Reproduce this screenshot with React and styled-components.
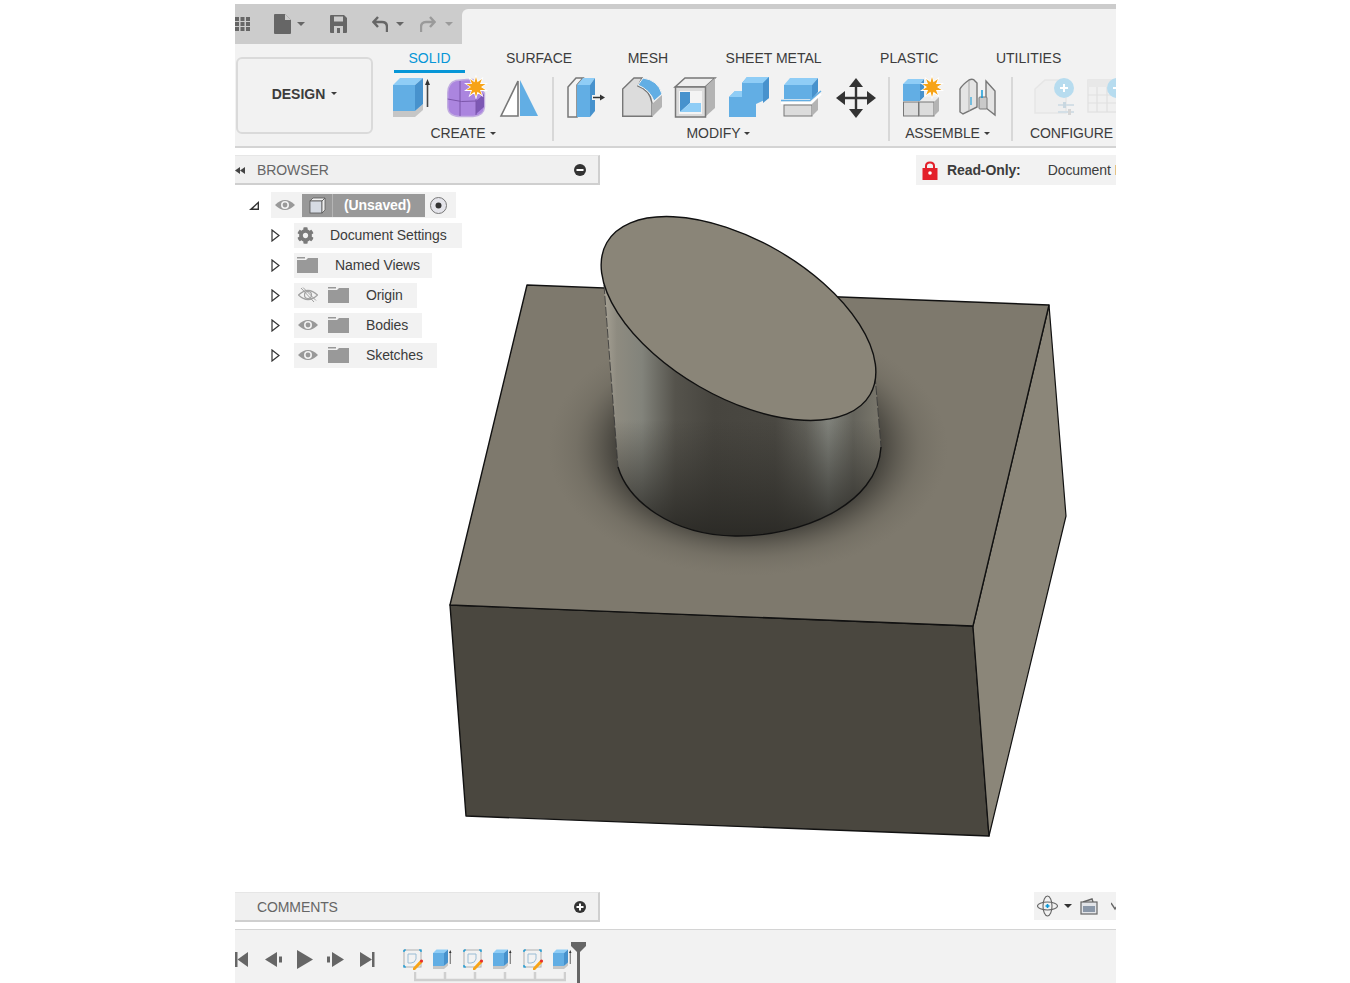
import React from 'react';
import styled, { createGlobalStyle } from 'styled-components';
import { FaCog } from 'react-icons/fa';

const GlobalStyle = createGlobalStyle`
  html, body {
    margin: 0;
    padding: 0;
    background: #ffffff;
    overflow: hidden;
  }
  * {
    box-sizing: border-box;
  }
`

const Stage = styled.div`
  width: 881px;
  height: 983px;
  margin-left: 235px;
  display: flex;
  flex-direction: column;
  overflow: hidden;
  font-family: "Liberation Sans", Arial, sans-serif;
  font-size: 14px;
  letter-spacing: -0.1px;
  color: #3c3c3c;
`

const TopBar = styled.div`
  height: 40px;
  margin-top: 4px;
  flex: none;
  display: flex;
  background: #cccccc;
`

const QuickBar = styled.div`
  width: 227px;
  flex: none;
  display: flex;
  align-items: center;
  padding-bottom: 1px;
`

const QuickIcon = styled.svg`
  display: block;
  flex: none;
  margin-left: ${p => p.$left}px;
`

const TabEar = styled.div`
  flex: 1;
  margin-top: 5px;
  background: #f2f2f2;
  border-top-left-radius: 6px;
`

const Caret = styled.span`
  flex: none;
  display: inline-block;
  margin-left: ${p => p.$left || 0}px;
  border-style: solid;
  border-width: ${p => p.$size || 4}px ${p => p.$size || 4}px 0;
  border-color: ${p => p.$color || '#3c3c3c'} transparent transparent;
`

const Ribbon = styled.div`
  height: 104px;
  flex: none;
  display: flex;
  background: #f2f2f2;
  border-bottom: 2px solid #d4d4d4;
`

const DesignButton = styled.div`
  width: 137px;
  height: 77px;
  flex: none;
  margin: 13px 0 0 1px;
  padding-bottom: 4px;
  display: flex;
  align-items: center;
  justify-content: center;
  gap: 6px;
  font-weight: bold;
  letter-spacing: 0;
  border: 2px solid #dadada;
  border-radius: 6px;
`

const RibbonBody = styled.div`
  margin-left: 20px;
  display: flex;
  flex: none;
  flex-direction: column;
`

const Tabs = styled.div`
  height: 29px;
  padding-left: 1px;
  display: flex;
`

const Tab = styled.div`
  height: 29px;
  margin-left: ${p => p.$gap}px;
  padding: 6px 14.5px 0;
  line-height: 16px;
  letter-spacing: 0;
  color: ${p => (p.$active ? '#0696d7' : '#3c3c3c')};
  border-bottom: 3px solid ${p => (p.$active ? '#0696d7' : 'transparent')};
`

const Tools = styled.div`
  margin-top: 4px;
  display: flex;
`

const ToolGroup = styled.div`
  flex: none;
  display: flex;
  flex-direction: column;
  align-items: center;
  padding-right: 12px;
  margin-right: ${p => p.$after || 0}px;
  border-right: ${p => (p.$last ? '0' : '2px solid #d8d8d8')};
  height: 64px;
`

const ToolRow = styled.div`
  display: flex;
  gap: ${p => p.$gap}px;
  height: 42px;
`

const ToolIcon = styled.svg`
  display: block;
  flex: none;
  width: 40px;
  height: 42px;
  overflow: visible;
`

const GroupLabel = styled.div`
  margin: 6px 7px 0 0;
  display: flex;
  align-items: center;
  gap: 4px;
  line-height: 16px;
  white-space: nowrap;
`

const Viewport = styled.div`
  position: relative;
  flex: 1;
  overflow: hidden;
  background: #ffffff;
`

const SceneCanvas = styled.svg`
  position: absolute;
  left: 0;
  top: 0;
  width: 881px;
  height: 782px;
`

const Overlay = styled.div`
  position: absolute;
  inset: 0;
  padding: 7px 0 7px;
  display: flex;
  flex-direction: column;
  justify-content: space-between;
`

const OverlayRow = styled.div`
  display: flex;
  justify-content: space-between;
  align-items: flex-start;
`

const Panel = styled.div`
  width: 365px;
  height: 30px;
  padding: 0 12px 0 22px;
  display: flex;
  align-items: center;
  position: relative;
  background: #f0f0f0;
  color: #666666;
  border-top: 1px solid #e6e6e6;
  border-right: 2px solid #cfcfcf;
  border-bottom: 2px solid #cfcfcf;
`

const PanelTitle = styled.div`
  flex: 1;
`

const PanelBack = styled.svg`
  position: absolute;
  left: 0;
  top: 11px;
`

const RoundButton = styled.svg`
  display: block;
`

const Tree = styled.div`
  padding-top: 5px;
  display: flex;
  flex-direction: column;
`

const TreeRow = styled.div`
  height: 30px;
  display: flex;
  align-items: center;
`

const Arrow = styled.svg`
  display: block;
  flex: none;
  margin-left: ${p => (p.$root ? 14 : 36)}px;
  margin-right: ${p => (p.$root ? 12 : 14)}px;
`

const Chip = styled.div`
  height: 25px;
  display: flex;
  align-items: center;
  padding: 0 ${p => p.$right || 14}px 0 3px;
  background: #f2f2f2;
`

const RowIcon = styled.svg`
  display: block;
  flex: none;
  margin-left: ${p => p.$left || 0}px;
`

const Gear = styled(FaCog)`
  flex: none;
  width: 17px;
  height: 17px;
  color: #7a7a7a;
`

const RowLabel = styled.span`
  margin-left: ${p => p.$left}px;
  white-space: nowrap;
`

const RootChip = styled(Chip)`
  height: 26px;
  padding: 0 9px 0 4px;
`

const Selected = styled.div`
  width: 123px;
  height: 23px;
  margin-left: 7px;
  display: flex;
  align-items: center;
  background: #999999;
  color: #ffffff;
  font-weight: bold;
`

const SelectedCube = styled.div`
  width: 31px;
  height: 100%;
  display: flex;
  align-items: center;
  justify-content: center;
  border-right: 1px solid #b5b5b5;
`

const SelectedName = styled.span`
  margin-left: 11px;
`

const ReadOnly = styled.div`
  width: 200px;
  height: 30px;
  display: flex;
  align-items: center;
  padding-left: 6px;
  background: #f2f2f2;
  white-space: nowrap;
  overflow: hidden;
`

const Lock = styled.svg`
  display: block;
  flex: none;
`

const ReadOnlyKey = styled.span`
  margin-left: 9px;
  font-weight: bold;
`

const ReadOnlyText = styled.span`
  margin-left: 27px;
`

const ViewTools = styled.div`
  width: 82px;
  height: 28px;
  display: flex;
  align-items: center;
  padding-left: 3px;
  background: #f2f2f2;
  overflow: hidden;
`

const ViewIcon = styled.svg`
  display: block;
  flex: none;
  margin-left: ${p => p.$left || 0}px;
`

const Timeline = styled.div`
  height: 54px;
  flex: none;
  position: relative;
  display: flex;
  background: #f2f2f2;
  border-top: 1px solid #d4d4d4;
`

const Transport = styled.div`
  width: 168px;
  flex: none;
  height: 100%;
  display: flex;
  align-items: center;
  padding-top: 6px;
`

const TransportIcon = styled.svg`
  display: block;
  flex: none;
  margin-left: ${p => p.$left}px;
`

const Track = styled.div`
  padding-top: 19px;
  display: flex;
  flex-direction: column;
`

const TrackItems = styled.div`
  display: flex;
  gap: 10px;
`

const TrackIcon = styled.svg`
  display: block;
  flex: none;
  width: 20px;
  height: 21px;
  overflow: visible;
`

const TrackBracket = styled.svg`
  display: block;
  margin: 2px 0 0 11px;
`

const Marker = styled.svg`
  position: absolute;
  left: 336px;
  top: 12px;
`

const BLUE = '#62aee4';
const BLUE_LIGHT = '#8fcdf6';
const BLUE_DARK = '#4792cd';
const GREY = '#dcdcdc';
const GREY_DARK = '#b4b4b4';

function starPoints(cx, cy, outer, inner, count) {
  const pts = [];
  for (let i = 0; i < count * 2; i++) {
    const r = i % 2 ? inner : outer;
    const a = (Math.PI * i) / count - Math.PI / 2;
    pts.push((cx + r * Math.cos(a)).toFixed(1) + ',' + (cy + r * Math.sin(a)).toFixed(1));
  }
  return pts.join(' ');
}

function Star({ x, y, r }) {
  return <polygon points={starPoints(x, y, r, r * 0.5, 10)} fill="#f7a316" stroke="#ffffff" strokeWidth="1.5" paintOrder="stroke" />;
}

function ExtrudeShapes() {
  return (
    <>
      <polygon points="0,34 22,34 30,27 30,33 22,40 0,40" fill="#c6c6c6" />
      <polygon points="0,8 7,1 30,1 22,8" fill={BLUE_LIGHT} />
      <rect x="0" y="8" width="22" height="26" fill={BLUE} />
      <polygon points="22,8 30,1 30,27 22,34" fill={BLUE_DARK} />
      <path d="M34.5 30V6" stroke="#444" strokeWidth="1.6" />
      <polygon points="34.5,2 32,8 37,8" fill="#333" />
    </>
  );
}

function ExtrudeIcon() {
  return <ToolIcon viewBox="0 0 40 42"><ExtrudeShapes /></ToolIcon>;
}

function FormIcon() {
  return (
    <ToolIcon viewBox="0 0 40 42">
      <path d="M0.700 16Q0.700 6 9 3.500L20 2.500H26L37.500 16V30Q37 39 26 39.500H12Q1 39 0.700 30Z" fill="#ab85df" stroke="#c2aee0" strokeWidth="1.400" />
      <polygon points="29,24 37,17 37,30 29,37" fill="#7d58b4" />
      <path d="M13 4V39M0.700 22Q14 26 29 24M29 22V38" fill="none" stroke="#7b55aa" strokeWidth="1" />
      <Star x={29} y={10} r={10} />
    </ToolIcon>
  );
}

function MirrorIcon() {
  return (
    <ToolIcon viewBox="0 0 40 42">
      <polygon points="18,4 18,39 1,39" fill="#ffffff" stroke="#777" strokeWidth="1.6" />
      <polygon points="20,3 38,39 20,39" fill={BLUE} />
    </ToolIcon>
  );
}

function PressPullIcon() {
  return (
    <ToolIcon viewBox="0 0 40 42">
      <polygon points="0,10 8,1 15,1 9,8 9,40 0,40" fill="#f4f4f4" stroke="#777" strokeWidth="1.5" />
      <polygon points="9,8 15,1 27,1 22,8" fill={BLUE_LIGHT} />
      <rect x="9" y="8" width="13" height="32" fill={BLUE} />
      <polygon points="22,8 27,1 27,34 22,40" fill={BLUE_DARK} />
      <rect x="24" y="18" width="6" height="5" fill="#f2f2f2" />
      <path d="M25 20.500H33" stroke="#333" strokeWidth="1.5" />
      <polygon points="37,20.500 32,17.500 32,23.500" fill="#333" />
    </ToolIcon>
  );
}

function FilletIcon() {
  return (
    <ToolIcon viewBox="0 0 40 42">
      <path d="M0.700 12L12 1H20L16 9Q28 13 30 26V39.300H0.700Z" fill={GREY} stroke="#777" strokeWidth="1.4" />
      <path d="M30 27L40 18V30L30 40Z" fill={GREY_DARK} />
      <path d="M21 1Q36 3 40 17L32 24Q28 13 16 8Z" fill={BLUE} stroke="#f2f2f2" strokeWidth="1" />
    </ToolIcon>
  );
}

function ShellIcon() {
  return (
    <ToolIcon viewBox="0 0 40 42">
      <polygon points="0,10 10,1 40,1 30,10" fill="#eeeeee" stroke="#777" strokeWidth="1.5" />
      <polygon points="30,10 40,1 40,31 30,40" fill={GREY_DARK} />
      <rect x="0.500" y="10" width="30" height="30" fill={GREY} stroke="#777" strokeWidth="1.5" />
      <rect x="4" y="14" width="23" height="23" fill="#f4f4f4" />
      <polygon points="5,15 15,15 15,26 5,35" fill={BLUE_DARK} />
      <polygon points="5,35 15,26 26,26 26,35" fill={BLUE_LIGHT} />
    </ToolIcon>
  );
}

function CombineIcon() {
  return (
    <ToolIcon viewBox="0 0 40 42">
      <polygon points="13,6 18,0 40,0 40,21 27,27 27,40 0,40 0,20 6,14 13,14" fill={BLUE} />
      <polygon points="13,6 18,0 40,0 34,6" fill={BLUE_LIGHT} />
      <polygon points="0,20 6,14 13,14 13,20" fill={BLUE_LIGHT} />
      <polygon points="34,6 40,0 40,21 34,26" fill={BLUE_DARK} />
    </ToolIcon>
  );
}

function SplitIcon() {
  return (
    <ToolIcon viewBox="0 0 40 42">
      <polygon points="2,8 8,1 36,1 30,8" fill={BLUE_LIGHT} />
      <rect x="2" y="8" width="28" height="14" fill={BLUE} />
      <polygon points="30,8 36,1 36,15 30,22" fill={BLUE_DARK} />
      <path d="M-1 26H29L39 17" fill="none" stroke="#ffffff" strokeWidth="2" />
      <path d="M-1 23.500H28L39 14" fill="none" stroke={BLUE} strokeWidth="1.500" />
      <rect x="2" y="28" width="28" height="11" fill={GREY} stroke="#777" strokeWidth="1" />
      <polygon points="30,27 36,21 36,33 30,39" fill={GREY_DARK} />
    </ToolIcon>
  );
}

function MoveIcon() {
  return (
    <ToolIcon viewBox="0 0 40 42">
      <path d="M20 6V35M5 21H35" stroke="#333" strokeWidth="2.400" />
      <polygon points="20,1 13,10 27,10" fill="#333" />
      <polygon points="20,41 13,32 27,32" fill="#333" />
      <polygon points="0,21 9,14 9,28" fill="#333" />
      <polygon points="40,21 31,14 31,28" fill="#333" />
    </ToolIcon>
  );
}

function ComponentIcon() {
  return (
    <ToolIcon viewBox="0 0 40 42">
      <polygon points="0,7 5,2 21,2 17,7" fill={BLUE_LIGHT} />
      <rect x="0" y="7" width="17" height="17" fill={BLUE} />
      <polygon points="17,7 21,2 21,20 17,24" fill={BLUE_DARK} />
      <rect x="0.500" y="25" width="15" height="14" fill={GREY} stroke="#777" strokeWidth="1" />
      <polygon points="16,25 21,20 36,20 31,25" fill="#ececec" />
      <rect x="16" y="25" width="15" height="14" fill={GREY} stroke="#777" strokeWidth="1" />
      <polygon points="31,25 36,20 36,34 31,39" fill={GREY_DARK} />
      <Star x={29} y={10} r={10} />
    </ToolIcon>
  );
}

function JointIcon() {
  return (
    <ToolIcon viewBox="0 0 40 42">
      <path d="M1 12Q3 8 10 3Q14 1 16 4L18 6V30L4 37L1 35Z" fill="#e4e4e4" stroke="#777" strokeWidth="1.400" />
      <path d="M10 4V34" stroke="#a8a8a8" strokeWidth="1" />
      <path d="M12 20V28" stroke="#0696d7" strokeWidth="1" />
      <path d="M27 4L36 14V38L27 31Z" fill="#e4e4e4" stroke="#777" strokeWidth="1.400" />
      <rect x="20" y="20" width="8" height="12" rx="1" fill="#c9c9c9" stroke="#777" strokeWidth="1" />
      <path d="M23 13V21" stroke="#0696d7" strokeWidth="1.400" />
    </ToolIcon>
  );
}

function PlusBadge() {
  return (
    <>
      <circle cx="30" cy="11" r="10" fill="#b7dcef" />
      <path d="M30 7V15M26 11H34" stroke="#ffffff" strokeWidth="2" />
    </>
  );
}

function ConfigureIcon() {
  return (
    <ToolIcon viewBox="0 0 40 42">
      <polygon points="1,12 11,3 32,3 32,36 1,36" fill="#efefef" stroke="#e6e6e6" strokeWidth="1.500" />
      <path d="M24 28H40M24 35H40" stroke="#d4dfe6" strokeWidth="2" />
      <rect x="29" y="25" width="3" height="6" fill="#c8d7e0" />
      <rect x="34" y="32" width="3" height="6" fill="#d6d6d6" />
      <PlusBadge />
    </ToolIcon>
  );
}

function TableIcon() {
  return (
    <ToolIcon viewBox="0 0 40 42">
      <rect x="1" y="3" width="30" height="32" fill="#f0f0f0" stroke="#e4e4e4" strokeWidth="1.500" />
      <rect x="1" y="3" width="30" height="7" fill="#e8e8e8" />
      <path d="M1 18H31M1 26H31M10 10V35M20 10V35" stroke="#e0e0e0" strokeWidth="1.200" />
      <PlusBadge />
    </ToolIcon>
  );
}

function FolderIcon({ left }) {
  return (
    <RowIcon $left={left} width="21" height="16" viewBox="0 0 21 16">
      <path d="M0 0H8V1.500H0Z" fill="#999" />
      <path d="M0 3H9L11 1H21V16H0Z" fill="#999" />
    </RowIcon>
  );
}

function EyeIcon({ off, left }) {
  return (
    <RowIcon $left={left} width="20" height="16" viewBox="0 0 20 16">
      {off ? (
        <>
          <path d="M0.500 8Q10 -1 19.500 8Q10 17 0.500 8Z" fill="none" stroke="#a0a0a0" strokeWidth="1.200" />
          <circle cx="10" cy="8" r="3.500" fill="none" stroke="#a0a0a0" strokeWidth="1.200" />
          <path d="M3 1L16 15M5 0.500L18 13.500" stroke="#a0a0a0" strokeWidth="1" />
        </>
      ) : (
        <>
          <path d="M0 8Q10 -2 20 8Q10 18 0 8Z" fill="#999" />
          <circle cx="10" cy="8" r="4" fill="#f2f2f2" />
          <circle cx="10" cy="8" r="2.400" fill="#999" />
        </>
      )}
    </RowIcon>
  );
}

function ExpandArrow() {
  return (
    <Arrow width="9" height="13" viewBox="0 0 9 13">
      <polygon points="1,1 8,6.500 1,12" fill="#ffffff" stroke="#333" strokeWidth="1.200" />
    </Arrow>
  );
}

function RootArrow() {
  return (
    <Arrow $root width="10" height="9" viewBox="0 0 10 9">
      <polygon points="0,9 10,9 10,0" fill="#333" />
      <polygon points="4,7.600 8.600,7.600 8.600,3" fill="#ffffff" />
    </Arrow>
  );
}

function SketchTrackIcon() {
  return (
    <TrackIcon viewBox="0 0 20 21">
      <rect x="1" y="1" width="17" height="17" fill="none" stroke="#b0b0b0" strokeWidth="1" />
      <path d="M1 1H3M16 1H18V3M1 1V3M1 16V18H3" fill="none" stroke="#0696d7" strokeWidth="1.200" />
      <path d="M5 5H13V10Q12 14 8 14H5Z" fill="none" stroke="#9abcd4" strokeWidth="1" />
      <path d="M10 19L17 11.500L19.500 13.500L12 21H10Z" fill="#f7a316" />
      <circle cx="18.500" cy="12" r="1.600" fill="#e8312c" />
    </TrackIcon>
  );
}

function ExtrudeTrackIcon() {
  return <TrackIcon viewBox="0 0 40 42"><ExtrudeShapes /></TrackIcon>;
}

const TABS = [
  { label: 'SOLID', gap: 0 },
  { label: 'SURFACE', gap: 26.5 },
  { label: 'MESH', gap: 26.5 },
  { label: 'SHEET METAL', gap: 28.5 },
  { label: 'PLASTIC', gap: 29.5 },
  { label: 'UTILITIES', gap: 28.5 },
];
const TRACK = [SketchTrackIcon, ExtrudeTrackIcon, SketchTrackIcon, ExtrudeTrackIcon, SketchTrackIcon, ExtrudeTrackIcon];

const CYLINDER = 'M603 275L618 467C628 500 670 535 735 536C800 537 878 505 881 447L875 370L738 330Z';

function Scene() {
  return (
    <SceneCanvas viewBox="235 148 881 782">
      <defs>
        <linearGradient id="cylinderShade" gradientUnits="userSpaceOnUse" x1="603" y1="0" x2="881" y2="0">
          <stop offset="0" stopColor="#a8a396" />
          <stop offset="0.05" stopColor="#8e8b80" />
          <stop offset="0.14" stopColor="#82837b" />
          <stop offset="0.26" stopColor="#55534c" />
          <stop offset="0.4" stopColor="#47453f" />
          <stop offset="0.62" stopColor="#4a4842" />
          <stop offset="0.73" stopColor="#62615a" />
          <stop offset="0.81" stopColor="#81837c" />
          <stop offset="0.9" stopColor="#65645c" />
          <stop offset="1" stopColor="#7b786d" />
        </linearGradient>
        <linearGradient id="cylinderFade" gradientUnits="userSpaceOnUse" x1="0" y1="420" x2="0" y2="536">
          <stop offset="0" stopColor="#2f2e2a" stopOpacity="0" />
          <stop offset="1" stopColor="#2a2925" stopOpacity="0.95" />
        </linearGradient>
        <radialGradient id="baseShadow" gradientUnits="userSpaceOnUse" cx="0" cy="0" r="1" gradientTransform="translate(748 448) scale(200 128)">
          <stop offset="0.6" stopColor="#2f2e2a" stopOpacity="0.95" />
          <stop offset="0.72" stopColor="#3f3d37" stopOpacity="0.6" />
          <stop offset="0.86" stopColor="#5a574e" stopOpacity="0.25" />
          <stop offset="1" stopColor="#6a665b" stopOpacity="0" />
        </radialGradient>
        <clipPath id="topFaceClip">
          <polygon points="527,285 1049,305 973,626 450,605" />
        </clipPath>
      </defs>
      <polygon points="450,605 973,626 989,836 466,816" fill="#4a473f" stroke="#111" strokeWidth="1.400" strokeLinejoin="round" />
      <polygon points="1049,305 1066,516 989,836 973,626" fill="#8b8679" stroke="#111" strokeWidth="1.200" strokeLinejoin="round" />
      <polygon points="527,285 1049,305 973,626 450,605" fill="#7e796d" stroke="#111" strokeWidth="1.400" strokeLinejoin="round" />
      <g clipPath="url(#topFaceClip)">
        <rect x="450" y="285" width="600" height="341" fill="url(#baseShadow)" />
      </g>
      <path d={CYLINDER} fill="url(#cylinderShade)" />
      <path d={CYLINDER} fill="url(#cylinderFade)" />
      <path d="M618 467C628 500 670 535 735 536C800 537 878 505 881 447" fill="none" stroke="#111" strokeWidth="1.400" />
      <path d="M604 285L618 467M875 375L881 447" fill="none" stroke="#333" strokeWidth="0.800" strokeDasharray="9 2" />
      <ellipse cx="738.500" cy="318.500" rx="152" ry="78.500" transform="rotate(30 738.500 318.500)" fill="#8a8578" stroke="#111" strokeWidth="1.400" />
    </SceneCanvas>
  );
}

function App() {
  return (
    <>
      <GlobalStyle />
      <Stage>
        <TopBar>
          <QuickBar>
            <QuickIcon $left={0} width="15" height="16" viewBox="0 0 15 16">
              <path d="M0 1H4V5H0ZM5.500 1H9.500V5H5.500ZM11 1H15V5H11ZM0 6H4V10H0ZM5.500 6H9.500V10H5.500ZM11 6H15V10H11ZM0 11H4V15H0ZM5.500 11H9.500V15H5.500ZM11 11H15V15H11Z" fill="#666" />
            </QuickIcon>
            <QuickIcon $left={24} width="17" height="20" viewBox="0 0 17 20">
              <path d="M1 0H11L17 6V19Q17 20 16 20H1Q0 20 0 19V1Q0 0 1 0Z" fill="#666" />
              <path d="M11 0V6H17" fill="#cccccc" />
            </QuickIcon>
            <Caret $left={6} $size={4.500} $color="#666" />
            <QuickIcon $left={25} width="17" height="18" viewBox="0 0 17 18">
              <path d="M1 0H14L17 3V17Q17 18 16 18H1Q0 18 0 17V1Q0 0 1 0Z" fill="#666" />
              <rect x="4" y="1.500" width="9" height="5" fill="#cccccc" />
              <rect x="4" y="11" width="9" height="7" fill="#cccccc" />
              <rect x="7" y="13" width="3" height="5" fill="#666" />
            </QuickIcon>
            <QuickIcon $left={25} width="16" height="16" viewBox="0 0 16 16">
              <path d="M6 1L1.500 6L6 11M2 6H10Q15 6 15 11V16" fill="none" stroke="#666" strokeWidth="2.400" />
            </QuickIcon>
            <Caret $left={8} $size={4.500} $color="#666" />
            <QuickIcon $left={16} width="16" height="16" viewBox="0 0 16 16">
              <path d="M10 1L14.500 6L10 11M14 6H6Q1 6 1 11V16" fill="none" stroke="#9a9a9a" strokeWidth="2.400" />
            </QuickIcon>
            <Caret $left={9} $size={4.500} $color="#9a9a9a" />
          </QuickBar>
          <TabEar />
        </TopBar>

        <Ribbon>
          <DesignButton>
            DESIGN
            <Caret $size={3.500} />
          </DesignButton>
          <RibbonBody>
            <Tabs>
              {TABS.map((tab, i) => <Tab key={tab.label} $gap={tab.gap} $active={i === 0}>{tab.label}</Tab>)}
            </Tabs>
            <Tools>
              <ToolGroup $after={14}>
                <ToolRow $gap={13.5}>
                  <ExtrudeIcon />
                  <FormIcon />
                  <MirrorIcon />
                </ToolRow>
                <GroupLabel>CREATE <Caret $size={3.500} /></GroupLabel>
              </ToolGroup>
              <ToolGroup $after={13}>
                <ToolRow $gap={13.6}>
                  <PressPullIcon />
                  <FilletIcon />
                  <ShellIcon />
                  <CombineIcon />
                  <SplitIcon />
                  <MoveIcon />
                </ToolRow>
                <GroupLabel>MODIFY <Caret $size={3.500} /></GroupLabel>
              </ToolGroup>
              <ToolGroup $after={17}>
                <ToolRow $gap={16}>
                  <ComponentIcon />
                  <JointIcon />
                </ToolRow>
                <GroupLabel>ASSEMBLE <Caret $size={3.500} /></GroupLabel>
              </ToolGroup>
              <ToolGroup $last>
                <ToolRow $gap={13}>
                  <ConfigureIcon />
                  <TableIcon />
                </ToolRow>
                <GroupLabel>CONFIGURE <Caret $size={3.500} /></GroupLabel>
              </ToolGroup>
            </Tools>
          </RibbonBody>
        </Ribbon>

        <Viewport>
          <Scene />
          <Overlay>
            <OverlayRow>
              <div>
                <Panel>
                  <PanelBack width="10" height="7" viewBox="0 0 10 7">
                    <polygon points="0,3.500 5,0 5,7" fill="#444" />
                    <polygon points="5,3.500 10,0 10,7" fill="#444" />
                  </PanelBack>
                  <PanelTitle>BROWSER</PanelTitle>
                  <RoundButton width="12" height="12" viewBox="0 0 12 12">
                    <circle cx="6" cy="6" r="6" fill="#333" />
                    <rect x="2.500" y="5" width="7" height="2" fill="#ffffff" />
                  </RoundButton>
                </Panel>
                <Tree>
                  <TreeRow>
                    <RootArrow />
                    <RootChip>
                      <EyeIcon />
                      <Selected>
                        <SelectedCube>
                          <svg width="17" height="17" viewBox="0 0 17 17">
                            <polygon points="1,4 4,1 16,1 13,4" fill="#f2f2f2" stroke="#555" strokeWidth="0.800" />
                            <rect x="1" y="4" width="12" height="12" fill="#d6dbe3" stroke="#555" strokeWidth="0.800" />
                            <polygon points="13,4 16,1 16,13 13,16" fill="#eeeeee" stroke="#555" strokeWidth="0.800" />
                          </svg>
                        </SelectedCube>
                        <SelectedName>(Unsaved)</SelectedName>
                      </Selected>
                      <RowIcon $left={5} width="17" height="17" viewBox="0 0 17 17">
                        <circle cx="8.500" cy="8.500" r="8" fill="#e4e4ea" stroke="#777" strokeWidth="1" />
                        <circle cx="8.500" cy="8.500" r="3" fill="#333" />
                      </RowIcon>
                    </RootChip>
                  </TreeRow>
                  <TreeRow>
                    <ExpandArrow />
                    <Chip $right={15}>
                      <Gear />
                      <RowLabel $left={16}>Document Settings</RowLabel>
                    </Chip>
                  </TreeRow>
                  <TreeRow>
                    <ExpandArrow />
                    <Chip $right={12}>
                      <FolderIcon />
                      <RowLabel $left={17}>Named Views</RowLabel>
                    </Chip>
                  </TreeRow>
                  <TreeRow>
                    <ExpandArrow />
                    <Chip>
                      <EyeIcon off left={1} />
                      <FolderIcon left={10} />
                      <RowLabel $left={17}>Origin</RowLabel>
                    </Chip>
                  </TreeRow>
                  <TreeRow>
                    <ExpandArrow />
                    <Chip>
                      <EyeIcon left={1} />
                      <FolderIcon left={10} />
                      <RowLabel $left={17}>Bodies</RowLabel>
                    </Chip>
                  </TreeRow>
                  <TreeRow>
                    <ExpandArrow />
                    <Chip>
                      <EyeIcon left={1} />
                      <FolderIcon left={10} />
                      <RowLabel $left={17}>Sketches</RowLabel>
                    </Chip>
                  </TreeRow>
                </Tree>
              </div>
              <ReadOnly>
                <Lock width="16" height="19" viewBox="0 0 16 19">
                  <path d="M4 8V5Q4 1.500 8 1.500Q12 1.500 12 5V8" fill="none" stroke="#e3202a" strokeWidth="2" />
                  <rect x="0.500" y="7" width="15" height="12" fill="#e3202a" />
                  <circle cx="8" cy="12" r="1.800" fill="#ffffff" />
                </Lock>
                <ReadOnlyKey>Read-Only:</ReadOnlyKey>
                <ReadOnlyText>Document Is Read-Only</ReadOnlyText>
              </ReadOnly>
            </OverlayRow>
            <OverlayRow>
              <Panel>
                <PanelTitle>COMMENTS</PanelTitle>
                <RoundButton width="12" height="12" viewBox="0 0 12 12">
                  <circle cx="6" cy="6" r="6" fill="#333" />
                  <path d="M2.500 6H9.500M6 2.500V9.500" stroke="#ffffff" strokeWidth="2" />
                </RoundButton>
              </Panel>
              <ViewTools>
                <ViewIcon width="21" height="22" viewBox="0 0 21 22">
                  <ellipse cx="10.500" cy="11" rx="4.500" ry="10" fill="none" stroke="#666" strokeWidth="1.100" />
                  <ellipse cx="10.500" cy="11" rx="10" ry="4" fill="none" stroke="#666" strokeWidth="1.100" />
                  <path d="M8.500 11H12.500M10.500 9V13" stroke="#0696d7" strokeWidth="1.600" />
                </ViewIcon>
                <Caret $left={6} $size={4} $color="#333" />
                <ViewIcon $left={8} width="18" height="17" viewBox="0 0 18 17">
                  <path d="M3 4L12 1L13 4" fill="none" stroke="#666" strokeWidth="1.400" />
                  <rect x="1" y="4" width="16" height="12" fill="#e2e4e8" stroke="#666" strokeWidth="1.200" />
                  <rect x="3" y="8" width="12" height="6" fill="#8a97a8" />
                </ViewIcon>
                <ViewIcon $left={13} width="10" height="14" viewBox="0 0 10 14">
                  <path d="M0 4L4 10L10 1" fill="none" stroke="#666" strokeWidth="1.400" />
                </ViewIcon>
              </ViewTools>
            </OverlayRow>
          </Overlay>
        </Viewport>

        <Timeline>
          <Transport>
            <TransportIcon $left={0} width="13" height="15" viewBox="0 0 13 15">
              <rect x="0" y="0" width="2.500" height="15" fill="#666" />
              <polygon points="13,0 13,15 2.500,7.500" fill="#666" />
            </TransportIcon>
            <TransportIcon $left={17} width="17" height="15" viewBox="0 0 17 15">
              <polygon points="12,0 12,15 0,7.500" fill="#666" />
              <rect x="14" y="4.500" width="3" height="6" fill="#666" />
            </TransportIcon>
            <TransportIcon $left={15} width="16" height="19" viewBox="0 0 16 19">
              <polygon points="0,0 16,9.500 0,19" fill="#666" />
            </TransportIcon>
            <TransportIcon $left={14} width="17" height="15" viewBox="0 0 17 15">
              <rect x="0" y="4.500" width="3" height="6" fill="#666" />
              <polygon points="5,0 17,7.500 5,15" fill="#666" />
            </TransportIcon>
            <TransportIcon $left={16} width="15" height="15" viewBox="0 0 15 15">
              <polygon points="0,0 12,7.500 0,15" fill="#666" />
              <rect x="12" y="0" width="2.500" height="15" fill="#666" />
            </TransportIcon>
          </Transport>
          <Track>
            <TrackItems>
              {TRACK.map((Item, i) => <Item key={i} />)}
            </TrackItems>
            <TrackBracket width="152" height="10" viewBox="0 0 152 10">
              <path d="M1 0V8H151V0M31 0V8M61 0V8M91 0V8M121 0V8" fill="none" stroke="#cfcfcf" strokeWidth="2.500" />
            </TrackBracket>
          </Track>
          <Marker width="15" height="41" viewBox="0 0 15 41">
            <polygon points="0,0 15,0 15,4 9,10 6,10 0,4" fill="#666" />
            <rect x="6" y="8" width="3" height="33" fill="#666" />
          </Marker>
        </Timeline>
      </Stage>
    </>
  );
}

export default App;
